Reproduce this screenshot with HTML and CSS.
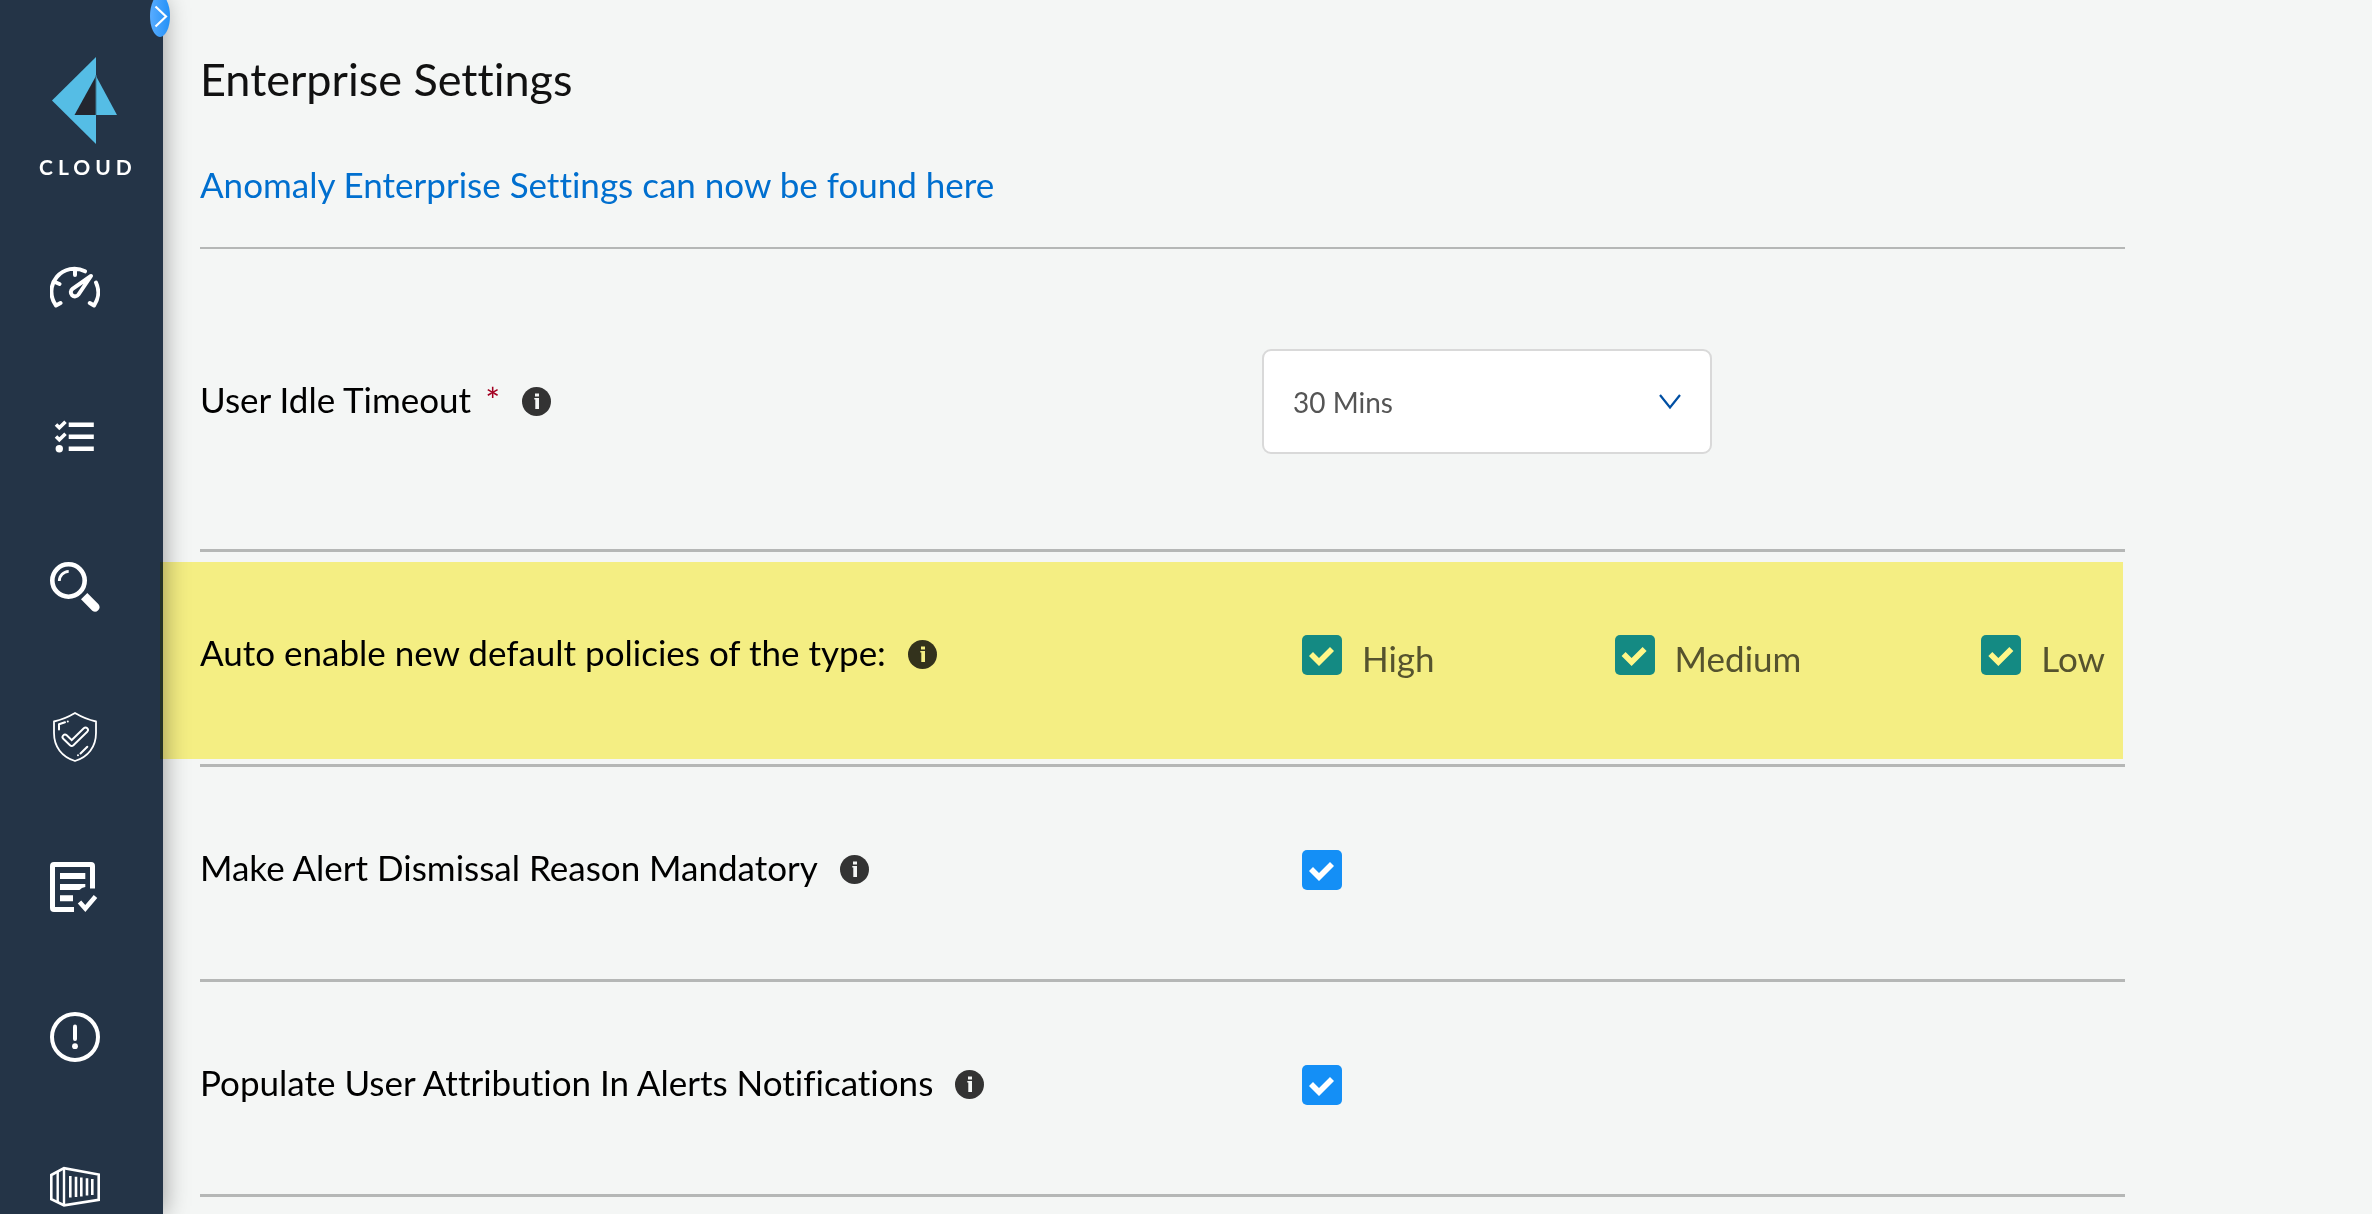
FILE: index.html
```html
<!DOCTYPE html>
<html lang="en">
<head>
<meta charset="utf-8">
<title>Enterprise Settings</title>
<link rel="stylesheet" href="styles.css">
</head>
<body>
<svg class="sprite" aria-hidden="true">
  <symbol id="info" viewBox="0 0 29 29">
    <circle cx="14.500" cy="14.500" r="14.500" fill="#333"/>
    <path d="M13 6.500h4v3h-4zM12.300 11h4.700v11h-3.700v-9.500h-1z" fill="#f4f6f5"/>
  </symbol>
</svg>
<div class="app">
  <aside class="sidebar">
    <button class="toggle" type="button" aria-label="Expand navigation">
      <svg width="20" height="42" viewBox="0 0 20 42" fill="none" stroke="#fff" stroke-width="2.200"><path d="M5.500 11.500L16 21.500L5.500 31.500"/></svg>
    </button>
    <a class="brand" href="#" aria-label="Cloud home">
      <svg width="66" height="88" viewBox="0 0 66 88">
        <path d="M0 43.500L44 0V87Z" fill="#55bde5"/>
        <path d="M44 19V58H22.500Z" fill="#23262f"/>
        <path d="M44 19L65 58H44Z" fill="#55bde5"/>
        <path d="M44 18V58" stroke="#3d7f9b" stroke-width="1"/>
      </svg>
      <span class="brand-name">CLOUD</span>
    </a>
    <nav class="nav">
      <a href="#" aria-label="Dashboard">
        <svg viewBox="0 0 50 50" fill="none" stroke="#fff" stroke-width="4" stroke-linecap="round" stroke-linejoin="round">
          <path d="M10.500 41L6 43.500A23 23 0 0 1 35 9.300M46 20.500A23 23 0 0 1 44 43.500L39.800 41M25 7V13M6 20.500L9.500 22"/>
          <path d="M41 14L28.500 32.500A4.200 4.200 0 1 1 22.500 26.800Z"/>
        </svg>
      </a>
      <a href="#" aria-label="Inventory">
        <svg viewBox="0 0 50 50" fill="none" stroke="#fff">
          <path d="M21 12.700H41.500M21 24.700H41.500M21 36.700H41.500" stroke-width="4.600" stroke-linecap="square" stroke-linejoin="round"/>
          <path d="M6 12.500L9.300 15.700L15.500 9.700M6 24.500L9.300 27.700L15.500 21.700" stroke-width="3.600"/>
          <circle cx="9.300" cy="36.700" r="3.700" fill="#fff" stroke="none"/>
        </svg>
      </a>
      <a href="#" aria-label="Investigate">
        <svg viewBox="0 0 50 50" fill="none" stroke="#fff">
          <circle cx="18.500" cy="18.500" r="16.200" stroke-width="4.600"/>
          <path d="M9.300 19A9.700 9.700 0 0 1 18.700 9.300" stroke-width="2.800"/>
          <path d="M37.300 31L48.500 42.300A4.500 4.500 0 0 1 42.300 48.700L31 37.300Z" fill="#fff" stroke="none"/>
        </svg>
      </a>
      <a href="#" aria-label="Policies">
        <svg viewBox="0 0 50 50" fill="none" stroke="#fff" stroke-width="1.800" stroke-linecap="round" stroke-linejoin="round">
          <path d="M25 1Q35 7 46 9.500V21C46 35 38 45 25 49C12 45 4 35 4 21V9.500Q15 7 25 1Z"/>
          <path d="M15 25L21.700 31.500L35.500 18" stroke-width="6.800"/>
          <path d="M15 25L21.700 31.500L35.500 18" stroke="#243447" stroke-width="3"/>
          <path d="M9 17.500V12.300L15 10.300M17.800 9.500V9.500M37.300 34.700L30.500 41.500M28 43.300V43.300" stroke-width="2"/>
        </svg>
      </a>
      <a href="#" aria-label="Compliance">
        <svg viewBox="0 0 50 50" fill="none" stroke="#fff">
          <path d="M42.500 26.500V4Q42.500 2.500 41 2.500H4Q2.500 2.500 2.500 4V46Q2.500 47.500 4 47.500H24" stroke-width="5"/>
          <path d="M10 14H35.300M10 36.300H23" stroke-width="6"/>
          <path d="M10 22H35.300V25Q31.500 25.500 29.500 28H10Z" fill="#fff" stroke="none"/>
          <path d="M29.500 40L35.300 46.500L45.500 34.500" stroke-width="4.600"/>
        </svg>
      </a>
      <a href="#" aria-label="Alerts">
        <svg viewBox="0 0 50 50" fill="none" stroke="#fff" stroke-width="4" stroke-linecap="round">
          <circle cx="25" cy="25" r="23"/>
          <path d="M25 14.500V27"/>
          <circle cx="25" cy="34.200" r="2.900" fill="#fff" stroke="none"/>
        </svg>
      </a>
      <a href="#" aria-label="Compute">
        <svg viewBox="0 0 50 50" fill="none" stroke="#fff" stroke-width="2.600">
          <path d="M1.300 13L14 6.200L48.700 12.500V37.800L14 43.300L1.300 37.300Z"/>
          <path d="M14 6V43.500M7.700 9V41" stroke-width="2.400"/>
          <path d="M20.300 14V35.500M26 14.700V35M31.300 15.500V34.500M37 16.300V33.600M42.300 17V33" stroke-width="2.600"/>
        </svg>
      </a>
    </nav>
  </aside>

  <main class="content">
    <h1 class="title">Enterprise Settings</h1>
    <p class="notice"><a href="#">Anomaly Enterprise Settings can now be found here</a></p>

    <form class="settings">
      <div class="row row-select">
        <div class="caption">
          <label for="timeout">User Idle Timeout <span class="required">*</span></label>
          <svg class="info"><use href="#info"/></svg>
        </div>
        <div class="select">
          <select id="timeout"><option>30 Mins</option><option>60 Mins</option></select>
          <svg class="chevron" viewBox="0 0 22 16" fill="none" stroke="#004fa3" stroke-width="2.200"><path d="M1 1L11 13.500L21 1"/></svg>
        </div>
      </div>

      <div class="row row-marked" role="group" aria-labelledby="auto">
        <div class="caption">
          <span id="auto">Auto enable new default policies of the type:</span>
          <svg class="info"><use href="#info"/></svg>
        </div>
        <div class="checks">
          <label class="check"><input type="checkbox" checked><span>High</span></label>
          <label class="check"><input type="checkbox" checked><span>Medium</span></label>
          <label class="check"><input type="checkbox" checked><span>Low</span></label>
        </div>
      </div>

      <div class="row">
        <div class="caption">
          <label for="dismissal">Make Alert Dismissal Reason Mandatory</label>
          <svg class="info"><use href="#info"/></svg>
        </div>
        <div class="checks"><input id="dismissal" type="checkbox" checked></div>
      </div>

      <div class="row">
        <div class="caption">
          <label for="attribution">Populate User Attribution In Alerts Notifications</label>
          <svg class="info"><use href="#info"/></svg>
        </div>
        <div class="checks"><input id="attribution" type="checkbox" checked></div>
      </div>
    </form>
  </main>
</div>
</body>
</html>
```
FILE: styles.css
```css
* {
  box-sizing: border-box;
}

body {
  margin: 0;
  background: #f4f6f5;
  color: #000;
  font-family: Lato, "Open Sans", sans-serif;
  font-size: 35px;
  font-variant-ligatures: none;
  line-height: 44px;
}

.sprite {
  display: none;
}

.app {
  display: flex;
  min-height: 100vh;
}

/* Sidebar */
.sidebar {
  position: relative;
  flex: none;
  width: 163px;
  padding-top: 57px;
  background: #243447;
  box-shadow: 0 0 24px rgba(0, 0, 0, 0.4);
}

.toggle {
  position: absolute;
  top: -5px;
  right: -7px;
  width: 20px;
  height: 42px;
  padding: 0;
  border: 0;
  border-radius: 50%;
  background: linear-gradient(90deg, #58acff, #2491f7);
}

.toggle svg,
.brand svg,
.nav svg {
  display: block;
}

.brand {
  display: flex;
  flex-direction: column;
  gap: 10px;
  padding-left: 39px;
  color: #fff;
  text-decoration: none;
}

.brand svg {
  margin-left: 13px;
}

.brand-name {
  font-size: 21px;
  font-weight: 700;
  line-height: 24px;
  letter-spacing: 5px;
}

.nav {
  display: flex;
  flex-direction: column;
  gap: 100px;
  padding: 83px 0 0 50px;
}

.nav a,
.nav svg {
  display: block;
  width: 50px;
  height: 50px;
}

/* Settings */
.content {
  flex: 1;
  min-width: 0;
  padding: 51px 247px 0 37px;
}

.title {
  margin: 0 0 55px;
  color: #111;
  font-size: 45px;
  font-weight: 400;
  line-height: 56px;
}

.notice {
  margin: 0;
}

.notice a {
  color: #006fcf;
  text-decoration: none;
}

.settings {
  margin-top: 41px;
  border-top: 2px solid #b5b7b6;
}

.row {
  position: relative;
  display: grid;
  grid-template-columns: 1062fr 863fr;
  align-items: start;
  padding: 83px 0 89px;
  border-bottom: 3px solid #b5b7b6;
}

.row-select {
  align-items: center;
  padding: 100px 0 95px;
}

.row-marked::after {
  content: "";
  position: absolute;
  inset: 10px 2px 5px -40px;
  z-index: 1;
  background: #fff788;
  mix-blend-mode: multiply;
  pointer-events: none;
}

.caption {
  display: flex;
  align-items: center;
  gap: 22px;
  height: 39px;
}

.caption label,
.caption span {
  padding-bottom: 6px;
}

.required {
  margin-left: 5px;
  color: #a30021;
}

.info {
  flex: none;
  width: 29px;
  height: 29px;
}

.select {
  position: relative;
  width: 450px;
}

select {
  display: block;
  width: 100%;
  height: 105px;
  padding: 0 60px 0 29px;
  appearance: none;
  border: 2px solid #d9d9d9;
  border-radius: 9px;
  background: #fff;
  color: #555;
  font: inherit;
  font-size: 28px;
}

.chevron {
  position: absolute;
  top: 45px;
  right: 31px;
  width: 22px;
  height: 16px;
  pointer-events: none;
}

.checks {
  display: flex;
  gap: 180px;
  height: 40px;
  padding-left: 40px;
}

.check {
  display: flex;
  gap: 20px;
  color: #555;
  line-height: 46px;
}

input[type="checkbox"] {
  flex: none;
  width: 40px;
  height: 40px;
  margin: 0;
  appearance: none;
  border-radius: 5px;
  background: #148ff6;
}

input[type="checkbox"]:checked::before {
  content: "";
  display: block;
  width: 40px;
  height: 40px;
  background: #fff;
  clip-path: polygon(7px 21px, 11px 17px, 17px 23px, 28px 12px, 32px 16px, 17px 31px);
}
```
